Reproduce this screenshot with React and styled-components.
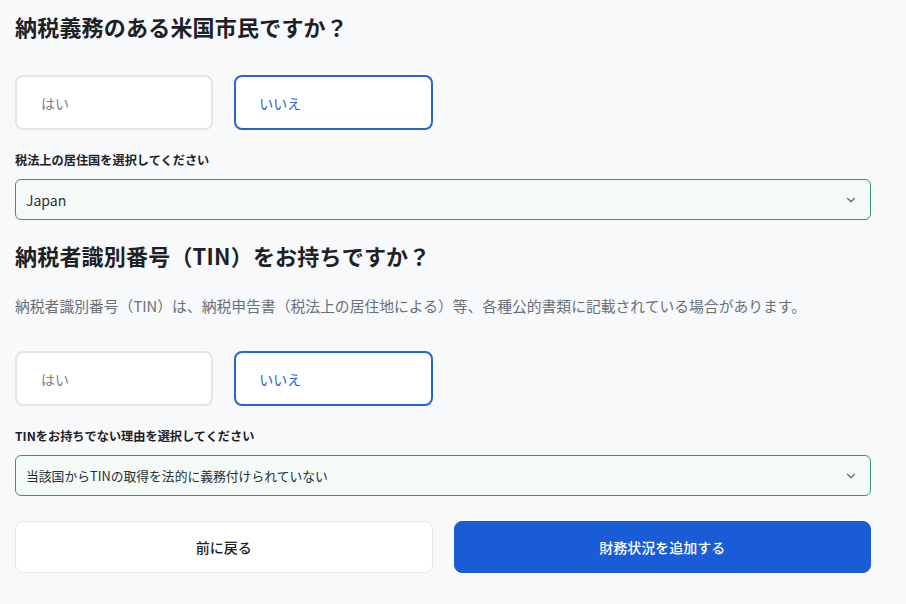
import styled, { createGlobalStyle } from "styled-components";

const GlobalStyle = createGlobalStyle`
  body {
    margin: 0;
    background: #f8f9fb;
    font-family: "Noto Sans CJK JP", "Noto Sans", sans-serif;
    color: #1f2328;
  }
`;

function Chevron() {
  return (
    <svg width="14" height="14" viewBox="0 0 24 24" fill="none" stroke="#5f6670" strokeWidth="2" strokeLinecap="round" strokeLinejoin="round">
      <polyline points="6 9 12 15 18 9" />
    </svg>
  );
}

function App() {
  return (
    <>
      <GlobalStyle />
      <Page>
        <Title>納税義務のある米国市民ですか？</Title>
        <Choices $top={32}>
          <Choice>はい</Choice>
          <Choice $active>いいえ</Choice>
        </Choices>
        <Label>税法上の居住国を選択してください</Label>
        <Select>
          <SelectText>Japan</SelectText>
          <Chevron />
        </Select>

        <Title $top={19}>納税者識別番号（TIN）をお持ちですか？</Title>
        <Desc>
          納税者識別番号（TIN）は、納税申告書（税法上の居住地による）等、各種公的書類に記載されている場合があります。
        </Desc>
        <Choices $top={33}>
          <Choice>はい</Choice>
          <Choice $active>いいえ</Choice>
        </Choices>
        <Label>TINをお持ちでない理由を選択してください</Label>
        <Select>
          <SelectText $jp>当該国からTINの取得を法的に義務付けられていない</SelectText>
          <Chevron />
        </Select>

        <Actions>
          <Button>前に戻る</Button>
          <Button $primary>財務状況を追加する</Button>
        </Actions>
      </Page>
    </>
  );
}

const Page = styled.main`
  width: 856px;
  padding: 0 15px;
`;

const Title = styled.h2`
  margin: ${(p) => p.$top || 10}px 0 0;
  font-size: 22px;
  line-height: 33px;
  font-weight: 700;
  color: #1d2126;
  letter-spacing: 0.2px;
`;

const Choices = styled.div`
  display: grid;
  grid-template-columns: repeat(4, 1fr);
  gap: 21px;
  margin-top: ${(p) => p.$top}px;
`;

const Choice = styled.button`
  height: 55px;
  box-sizing: border-box;
  text-align: left;
  padding: 0 0 0 ${(p) => (p.$active ? 23 : 24)}px;
  border-radius: 8px;
  background: #fff;
  border: ${(p) => (p.$active ? "2px solid #2666cc" : "2px solid #e3e5e8")};
  color: ${(p) => (p.$active ? "#2666cc" : "#7a7f86")};
  font-family: inherit;
  font-size: 14px;
`;

const Label = styled.div`
  margin-top: 20px;
  font-size: 12.2px;
  line-height: 20px;
  font-weight: 700;
  color: #1d2126;
`;

const Select = styled.div`
  margin-top: 9px;
  height: 41px;
  box-sizing: border-box;
  display: flex;
  align-items: center;
  justify-content: space-between;
  padding: 0 12px 0 10px;
  border: 1px solid #3b9479;
  border-radius: 6px;
  background: #f4faf8;
  color: #2a2f35;
`;

const SelectText = styled.span`
  font-size: ${(p) => (p.$jp ? 12.8 : 14)}px;
`;

const Desc = styled.p`
  margin: 22px 0 0;
  font-size: 14.8px;
  line-height: 24px;
  color: #6a7078;
`;

const Actions = styled.div`
  display: grid;
  grid-template-columns: 1fr 1fr;
  gap: 21px;
  margin-top: 25px;
`;

const Button = styled.button`
  height: 52px;
  border-radius: 8px;
  font-family: inherit;
  font-size: 14px;
  font-weight: 500;
  border: 1px solid ${(p) => (p.$primary ? "#1a5cd6" : "#e6e8eb")};
  background: ${(p) => (p.$primary ? "#1a5cd6" : "#fff")};
  color: ${(p) => (p.$primary ? "#fff" : "#1d2126")};
`;

export default App;
